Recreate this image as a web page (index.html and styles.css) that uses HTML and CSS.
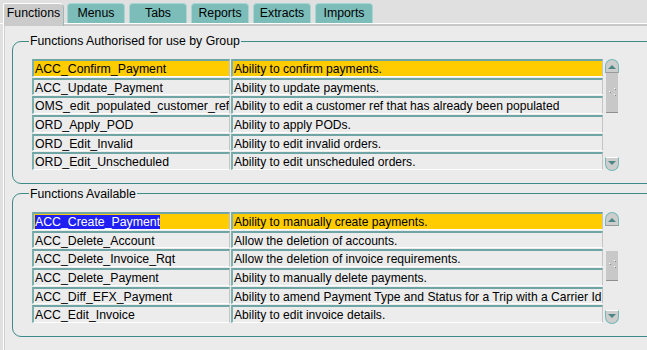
FILE: index.html
```html
<!DOCTYPE html>
<html lang="en">
<head>
  <meta charset="UTF-8" />
  <title>Functions</title>
  <link rel="stylesheet" href="styles.css">
</head>
<body>

  <div class="tabbar">
    <div class="tab selected">Functions</div>
    <div class="tab">Menus</div>
    <div class="tab">Tabs</div>
    <div class="tab">Reports</div>
    <div class="tab">Extracts</div>
    <div class="tab">Imports</div>
  </div>

  <div class="panel">

    <fieldset class="group">
      <legend>Functions Authorised for use by Group</legend>
      <div class="list">
        <div class="rows">
          <div class="row current"><div class="cell name">ACC_Confirm_Payment</div><div class="cell desc">Ability to confirm payments.</div></div>
          <div class="row"><div class="cell name">ACC_Update_Payment</div><div class="cell desc">Ability to update payments.</div></div>
          <div class="row"><div class="cell name">OMS_edit_populated_customer_ref</div><div class="cell desc">Ability to edit a customer ref that has already been populated</div></div>
          <div class="row"><div class="cell name">ORD_Apply_POD</div><div class="cell desc">Ability to apply PODs.</div></div>
          <div class="row"><div class="cell name">ORD_Edit_Invalid</div><div class="cell desc">Ability to edit invalid orders.</div></div>
          <div class="row"><div class="cell name">ORD_Edit_Unscheduled</div><div class="cell desc">Ability to edit unscheduled orders.</div></div>
        </div>
        <div class="scrollbar">
          <div class="btn up"><span class="arrow"></span></div>
          <div class="track">
            <div class="thumb big">
              <svg width="12" height="12" viewBox="0 0 12 12"><rect x="3" y="4" width="1" height="1" fill="#fff"/><rect x="8" y="1" width="1" height="1" fill="#fff"/><rect x="8" y="7" width="1" height="1" fill="#fff"/><rect x="4" y="5" width="1" height="1" fill="#8a8a8a"/><rect x="9" y="2" width="1" height="1" fill="#8a8a8a"/><rect x="9" y="8" width="1" height="1" fill="#8a8a8a"/></svg>
            </div>
          </div>
          <div class="btn down"><span class="arrow"></span></div>
        </div>
      </div>
    </fieldset>

    <fieldset class="group">
      <legend>Functions Available</legend>
      <div class="list">
        <div class="rows">
          <div class="row current"><div class="cell name"><span class="sel">ACC_Create_Payment</span></div><div class="cell desc">Ability to manually create payments.</div></div>
          <div class="row"><div class="cell name">ACC_Delete_Account</div><div class="cell desc">Allow the deletion of accounts.</div></div>
          <div class="row"><div class="cell name">ACC_Delete_Invoice_Rqt</div><div class="cell desc">Allow the deletion of invoice requirements.</div></div>
          <div class="row"><div class="cell name">ACC_Delete_Payment</div><div class="cell desc">Ability to manually delete payments.</div></div>
          <div class="row"><div class="cell name">ACC_Diff_EFX_Payment</div><div class="cell desc">Ability to amend Payment Type and Status for a Trip with a Carrier Id</div></div>
          <div class="row"><div class="cell name">ACC_Edit_Invoice</div><div class="cell desc">Ability to edit invoice details.</div></div>
        </div>
        <div class="scrollbar">
          <div class="btn up"><span class="arrow"></span></div>
          <div class="track">
            <div class="thumb small">
              <svg width="12" height="12" viewBox="0 0 12 12"><rect x="3" y="4" width="1" height="1" fill="#fff"/><rect x="8" y="1" width="1" height="1" fill="#fff"/><rect x="8" y="7" width="1" height="1" fill="#fff"/><rect x="4" y="5" width="1" height="1" fill="#8a8a8a"/><rect x="9" y="2" width="1" height="1" fill="#8a8a8a"/><rect x="9" y="8" width="1" height="1" fill="#8a8a8a"/></svg>
            </div>
          </div>
          <div class="btn down"><span class="arrow"></span></div>
        </div>
      </div>
    </fieldset>

  </div>

</body>
</html>
```

FILE: styles.css
```css
* {
  box-sizing: border-box;
}

body {
  margin: 0;
  padding: 0;
  width: 647px;
  height: 350px;
  overflow: hidden;
  background: #e0e0e0;
  font-family: "Liberation Sans", Arial, sans-serif;
  font-size: 12.3px;
  color: #000;
}

/* tab strip */

.tabbar {
  display: flex;
  align-items: flex-end;
  gap: 4px;
  height: 24px;
  padding: 3px 0 0 3px;
  border-bottom: 1px solid #ffffff;
}

.tab {
  width: 58px;
  height: 20px;
  line-height: 19px;
  text-align: center;
  background: #7cbcb9;
  border: 1px solid #a9d6d3;
  border-bottom: none;
  border-radius: 4px 4px 0 0;
}

.tab.selected {
  width: 61px;
  height: 23px;
  margin-right: -1px;
  margin-bottom: -3px;
  padding-bottom: 3px;
  background: #cbcbcb;
  border-color: #ffffff #9db8b6 transparent #ffffff;
  border-radius: 2px 5px 0 0;
  position: relative;
  z-index: 1;
}

/* main panel */

.panel {
  height: 326px;
  margin-left: 3px;
  overflow: hidden;
  background: #ebebeb;
  border-top: 2px solid #c8c8c8;
  border-left: 1px solid #ffffff;
  box-shadow: inset 1px 0 0 #cfcfcf;
  padding-top: 8px;
}

.group {
  margin: 0 -30px 3px 8px;
  padding: 11px 0 12px 19px;
  border: 1px solid #3e8a87;
  border-radius: 9px;
}

.group legend {
  margin-left: -3px;
  padding: 0 1px;
  line-height: 14px;
}

.list {
  display: flex;
  gap: 2px;
}

.rows {
  display: flex;
  flex-direction: column;
}

.row {
  display: flex;
  gap: 1px;
  height: 18.67px;
  padding-bottom: 1px;
}

.cell {
  height: 100%;
  padding-left: 1px;
  line-height: 16px;
  white-space: nowrap;
  overflow-x: clip;
  overflow-y: visible;
  background: #ececec;
  border-top: 2px solid #6fa6a5;
  border-left: 2px solid #7cb1b0;
  border-right: 1px solid #c4c4c4;
  border-bottom: 1px solid #ffffff;
}

.name {
  width: 198px;
}

.desc {
  width: 372px;
  font-size: 12.1px;
}

.row.current .cell {
  background: #ffcc00;
}

.sel {
  display: inline-block;
  height: 14px;
  line-height: 15px;
  background: #2020f4;
  color: #ffffff;
}

/* scrollbar */

.scrollbar {
  display: flex;
  flex-direction: column;
  width: 14px;
}

.btn {
  height: 14px;
  background: #cdcdcd;
  border: 1px solid #74b9b6;
  display: flex;
  justify-content: center;
  align-items: center;
}

.btn.up {
  border-bottom-color: #9a9a9a;
  border-radius: 7px 7px 0 0;
}

.btn.down {
  border-top-color: #ffffff;
  border-radius: 0 0 7px 7px;
}

.arrow {
  width: 0;
  height: 0;
  border-left: 4px solid transparent;
  border-right: 4px solid transparent;
}

.up .arrow {
  margin-top: 2px;
  border-bottom: 4px solid #4c8785;
}

.down .arrow {
  margin-bottom: 2px;
  border-top: 4px solid #4c8785;
}

.track {
  flex: 1;
  padding: 0 1px;
}

.thumb {
  display: flex;
  align-items: center;
  background: #c8c8c8;
  border-bottom: 1px solid #8e8e8e;
}

.thumb.big {
  height: 40px;
}

.thumb.small {
  height: 30px;
  margin-top: 25px;
}
```
